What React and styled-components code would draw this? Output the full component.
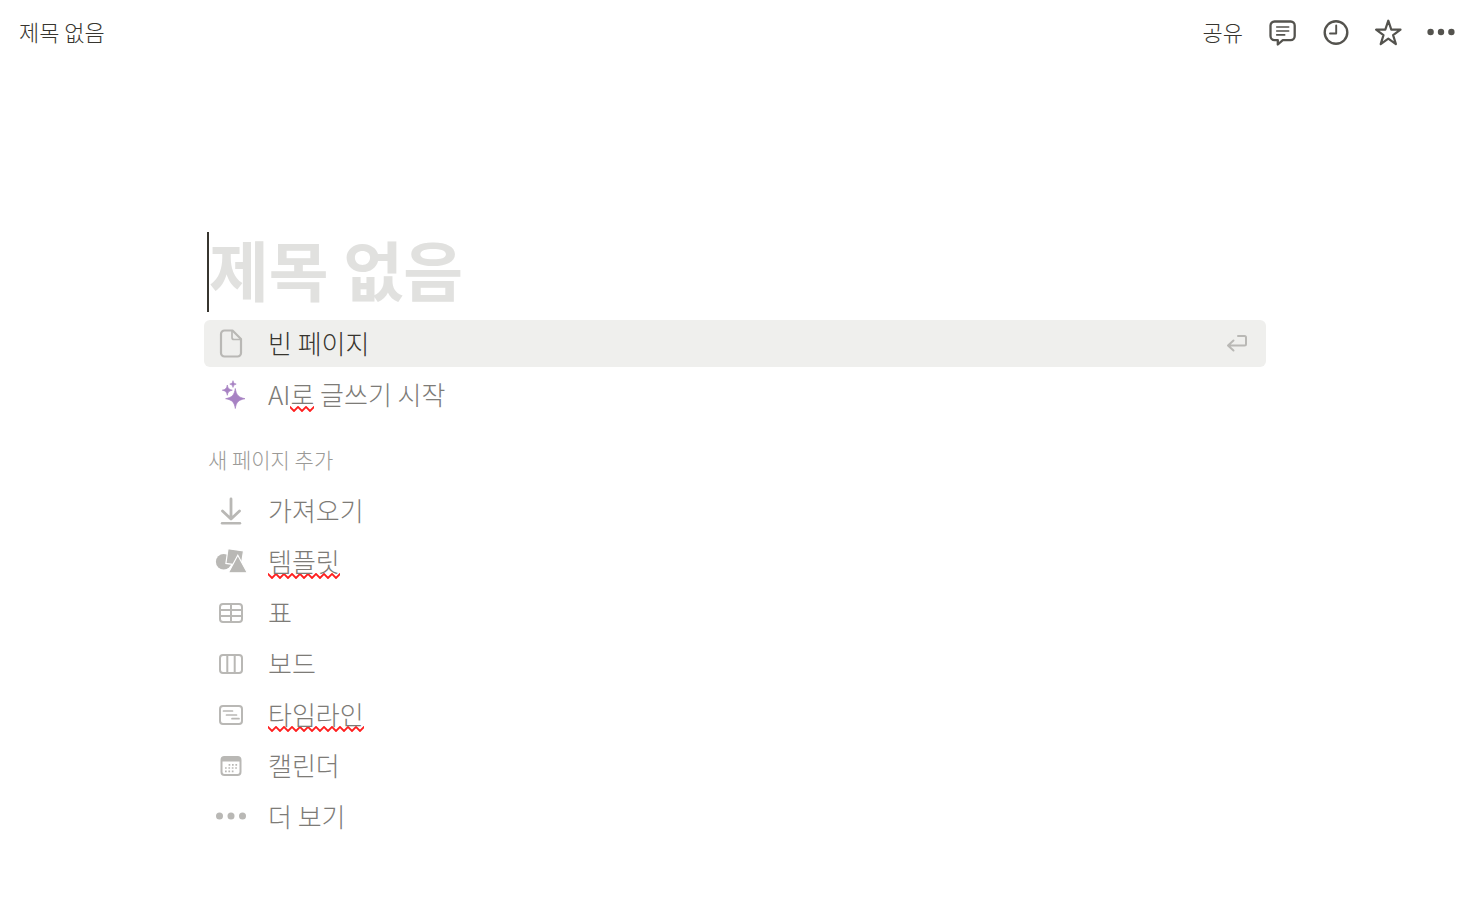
import React, { useState } from "react";
import styled, { createGlobalStyle, css } from "styled-components";

const GlobalStyle = createGlobalStyle`
  * {
    box-sizing: border-box;
  }
  body {
    margin: 0;
    background: #fff;
    color: #37352f;
    font-family: "Noto Sans CJK KR", sans-serif;
  }
  button,
  input {
    font: inherit;
    color: inherit;
    border: none;
    background: none;
    padding: 0;
    margin: 0;
  }
`;

const CommentIcon = () => (
  <svg width="28" height="28" viewBox="0 0 28 28" fill="none" stroke="#54534e" strokeWidth="2.3" strokeLinejoin="round" strokeLinecap="round">
    <path d="M4.5 2.5h16.2a4 4 0 0 1 4 4v10.6a4 4 0 0 1-4 4h-7.9l-5 4.4v-4.4H4.5a4 4 0 0 1-4-4V6.5a4 4 0 0 1 4-4z" />
    <path d="M6.7 8h12M6.7 12h12M6.7 15.900h8" strokeWidth="1.6" />
  </svg>
);

const ClockIcon = () => (
  <svg width="28" height="28" viewBox="0 0 28 28" fill="none" stroke="#54534e" strokeWidth="2.4" strokeLinecap="round" strokeLinejoin="round">
    <circle cx="14" cy="13.5" r="11.3" />
    <path d="M14.2 6.500v8H8" strokeWidth="1.9" />
  </svg>
);

const StarIcon = () => (
  <svg width="28" height="28" viewBox="0 0 28 28" fill="none" stroke="#54534e" strokeWidth="2.2" strokeLinejoin="round">
    <path d="M14.300 1.700l3 8.900 9.200.1-7.400 5.500 2.800 8.900-7.600-5.400-7.600 5.400 2.800-8.900-7.400-5.500 9.200-.1z" />
  </svg>
);

const DotsIcon = ({ r = 3.2, step = 10.4 }) => (
  <svg width="30" height="28" viewBox="0 0 30 28" fill="currentColor">
    <circle cx={15 - step} cy="13" r={r} />
    <circle cx="15" cy="13" r={r} />
    <circle cx={15 + step} cy="13" r={r} />
  </svg>
);

const PageIcon = () => (
  <svg width="30" height="30" viewBox="0 0 30 30" fill="none" stroke="currentColor" strokeWidth="2.2" strokeLinejoin="round">
    <path d="M8.5 1.5h8L25 10v14a3.5 3.5 0 0 1-3.5 3.5h-13A3.5 3.5 0 0 1 5 24V5a3.5 3.5 0 0 1 3.5-3.5z" />
    <path d="M16 2v6.5a2 2 0 0 0 2 2h7" strokeWidth="1.7" />
  </svg>
);

const SparkleIcon = () => (
  <svg width="30" height="30" viewBox="0 0 30 30" fill="#a782c3" stroke="#a782c3" strokeWidth=".7">
    <path d="M19.3 8.500c1.100 6.500 2.900 8.800 9.700 10.200-6.800 1.400-8.600 3.300-9.700 9.800-1.100-6.500-2.900-8.400-9.700-9.800 6.800-1.400 8.600-3.700 9.700-10.200z" />
    <path d="M11.3 5c.6 3.400 1.500 4.400 5 5.200-3.500.8-4.400 1.700-5 5.100-.6-3.400-1.500-4.300-5-5.100 3.500-.8 4.400-1.800 5-5.200z" />
    <path d="M17 .7c.4 2.300 1 2.800 3.200 3.400-2.200.6-2.800 1.100-3.200 3.300-.4-2.200-1-2.700-3.200-3.300C16 3.500 16.600 3 17 .7z" />
  </svg>
);

const ImportIcon = () => (
  <svg width="30" height="30" viewBox="0 0 30 30" fill="none" stroke="currentColor" strokeWidth="2.8" strokeLinecap="round" strokeLinejoin="round">
    <path d="M15 3v19M6.5 15l8.5 8 8.5-8" />
    <path d="M6 27.2h18" strokeWidth="2.4" />
  </svg>
);

const TemplateIcon = () => (
  <svg width="30" height="30" viewBox="0 0 30 30" fill="currentColor">
    <circle cx="7.7" cy="14.800" r="7.8" />
    <path d="M12 1.700l15.500 2.300-2.300 14.600-15.300-2.200z" stroke="#fff" strokeWidth="1.2" />
    <path d="M21.800 8.200L31.300 25.800H12.400z" stroke="#fff" strokeWidth="1.2" />
  </svg>
);

const TableIcon = () => (
  <svg width="30" height="30" viewBox="0 0 30 30" fill="none" stroke="currentColor" strokeWidth="2">
    <rect x="4" y="6" width="22" height="18" rx="3" />
    <path d="M4 12h22M4 18h22M15 6v18" />
  </svg>
);

const BoardIcon = () => (
  <svg width="30" height="30" viewBox="0 0 30 30" fill="none" stroke="currentColor" strokeWidth="2">
    <rect x="4" y="6" width="22" height="18" rx="3" />
    <path d="M11.3 6v18M18.7 6v18" />
  </svg>
);

const TimelineIcon = () => (
  <svg width="30" height="30" viewBox="0 0 30 30" fill="none" stroke="currentColor" strokeWidth="2">
    <rect x="4" y="6" width="22" height="18" rx="3" />
    <path d="M7.5 11h9M10.5 15h10M16 18.7h7" strokeWidth="1.7" strokeLinecap="round" />
  </svg>
);

const CalendarIcon = () => (
  <svg width="30" height="30" viewBox="0 0 30 30" fill="none" stroke="currentColor">
    <rect x="5.5" y="6" width="19" height="18" rx="3" strokeWidth="2" />
    <path d="M5.5 10V9a3 3 0 0 1 3-3h13a3 3 0 0 1 3 3v1z" fill="currentColor" />
    <path d="M12.6 13.8h8.5M9 17h12M9 20.4h8.5" strokeWidth="1.7" strokeDasharray="1.7 1.7" />
  </svg>
);

const EnterIcon = () => (
  <svg width="22" height="20" viewBox="0 0 22 20" fill="none" stroke="#b9b8b5" strokeWidth="2" strokeLinecap="round" strokeLinejoin="round">
    <path d="M12 2h6.5a1.5 1.5 0 0 1 1.5 1.5V10a1.5 1.5 0 0 1-1.5 1.5H2.5M7.5 6.5l-5.5 5 5.5 5" />
  </svg>
);

const startItems = [
  { id: "empty", icon: <PageIcon />, label: "빈 페이지" },
  { id: "ai", icon: <SparkleIcon />, label: "AI로 글쓰기 시작", misspelled: "로" },
];

const addItems = [
  { id: "import", icon: <ImportIcon />, label: "가져오기" },
  { id: "template", icon: <TemplateIcon />, label: "템플릿", misspelled: "템플릿" },
  { id: "table", icon: <TableIcon />, label: "표" },
  { id: "board", icon: <BoardIcon />, label: "보드" },
  { id: "timeline", icon: <TimelineIcon />, label: "타임라인", misspelled: "타임라인" },
  { id: "calendar", icon: <CalendarIcon />, label: "캘린더" },
  { id: "more", icon: <DotsIcon r={3.5} step={11.5} />, label: "더 보기" },
];

const Label = ({ text, misspelled }) => {
  if (!misspelled) return <ItemLabel>{text}</ItemLabel>;

  const [before, after] = text.split(misspelled);
  return (
    <ItemLabel>
      {before}
      <Misspelled>{misspelled}</Misspelled>
      {after}
    </ItemLabel>
  );
};

const Menu = ({ items, selected, onSelect }) => (
  <MenuList>
    {items.map((item) => (
      <li key={item.id}>
        <MenuItem
          type="button"
          $active={selected === item.id}
          onClick={() => onSelect(item.id)}
        >
          <ItemIcon>{item.icon}</ItemIcon>
          <Label text={item.label} misspelled={item.misspelled} />
          {selected === item.id && <EnterIcon />}
        </MenuItem>
      </li>
    ))}
  </MenuList>
);

const App = () => {
  const [title, setTitle] = useState("");
  const [selected, setSelected] = useState("empty");

  return (
    <>
      <GlobalStyle />
      <Topbar>
        <Breadcrumb href="#">제목 없음</Breadcrumb>
        <Actions>
          <ShareButton type="button">공유</ShareButton>
          <IconButton type="button" aria-label="댓글">
            <CommentIcon />
          </IconButton>
          <IconButton type="button" aria-label="업데이트">
            <ClockIcon />
          </IconButton>
          <IconButton type="button" aria-label="즐겨찾기">
            <StarIcon />
          </IconButton>
          <IconButton type="button" aria-label="더 보기">
            <DotsIcon />
          </IconButton>
        </Actions>
      </Topbar>
      <Content>
        <TitleField>
          <TitleInput
            aria-label="제목"
            placeholder="제목 없음"
            value={title}
            onChange={(e) => setTitle(e.target.value)}
          />
        </TitleField>
        <Menu items={startItems} selected={selected} onSelect={setSelected} />
        <SectionTitle>새 페이지 추가</SectionTitle>
        <Menu items={addItems} selected={selected} onSelect={setSelected} />
      </Content>
    </>
  );
};

export default App;

const topbarText = css`
  padding-bottom: 4px;
  font-size: 22px;
  font-weight: 300;
  line-height: 32px;
`;

const Topbar = styled.header`
  display: flex;
  align-items: center;
  justify-content: space-between;
  height: 66px;
  padding: 0 23px 0 19px;
`;

const Breadcrumb = styled.a`
  ${topbarText}
  color: inherit;
  text-decoration: none;
`;

const Actions = styled.div`
  display: flex;
  align-items: center;
  gap: 24px;
`;

const ShareButton = styled.button`
  ${topbarText}
  margin-right: 3px;
  cursor: pointer;
`;

const IconButton = styled.button`
  display: flex;
  color: #54534e;
  cursor: pointer;

  svg {
    overflow: visible;
  }
`;

const Content = styled.main`
  padding: 166px 213px 48px 204px;
`;

const TitleField = styled.div`
  margin: 0 3px 8px;
  border-left: 2px solid #37352f;
`;

const TitleInput = styled.input`
  display: block;
  width: 100%;
  height: 80px;
  padding-bottom: 8px;
  font-size: 65px;
  font-weight: 700;
  line-height: 72px;
  outline: none;
  caret-color: transparent;

  &::placeholder {
    color: #e1e1df;
    opacity: 1;
  }
`;

const MenuList = styled.ul`
  display: flex;
  flex-direction: column;
  gap: 4px;
  margin: 0;
  padding: 0;
  list-style: none;
`;

const MenuItem = styled.button`
  display: flex;
  align-items: center;
  width: 100%;
  height: 47px;
  padding: 0 18px 0 12px;
  border-radius: 6px;
  color: #7d7b77;
  text-align: left;
  cursor: pointer;
  ${({ $active }) =>
    $active &&
    css`
      background: #efefed;
      color: #37352f;
    `}
`;

const ItemIcon = styled.span`
  display: flex;
  width: 30px;
  margin-right: 22px;
  color: #b9b8b5;

  svg {
    overflow: visible;
  }
`;

const ItemLabel = styled.span`
  flex: 1;
  padding-bottom: 2px;
  font-size: 26px;
  font-weight: 300;
  line-height: 40px;
`;

const wave = encodeURIComponent(
  '<svg xmlns="http://www.w3.org/2000/svg" width="8" height="6" viewBox="0 0 8 6"><path d="M-2 3L0 1l4 4 4-4 2 2" fill="none" stroke="#ff1f1f" stroke-width="1.9"/></svg>'
);

const Misspelled = styled.span`
  background: url("data:image/svg+xml,${wave}") repeat-x left bottom;
`;

const SectionTitle = styled.h2`
  margin: 25px 4px 12px;
  font-size: 21px;
  font-weight: 300;
  line-height: 32px;
  color: #9b9a97;
`;
